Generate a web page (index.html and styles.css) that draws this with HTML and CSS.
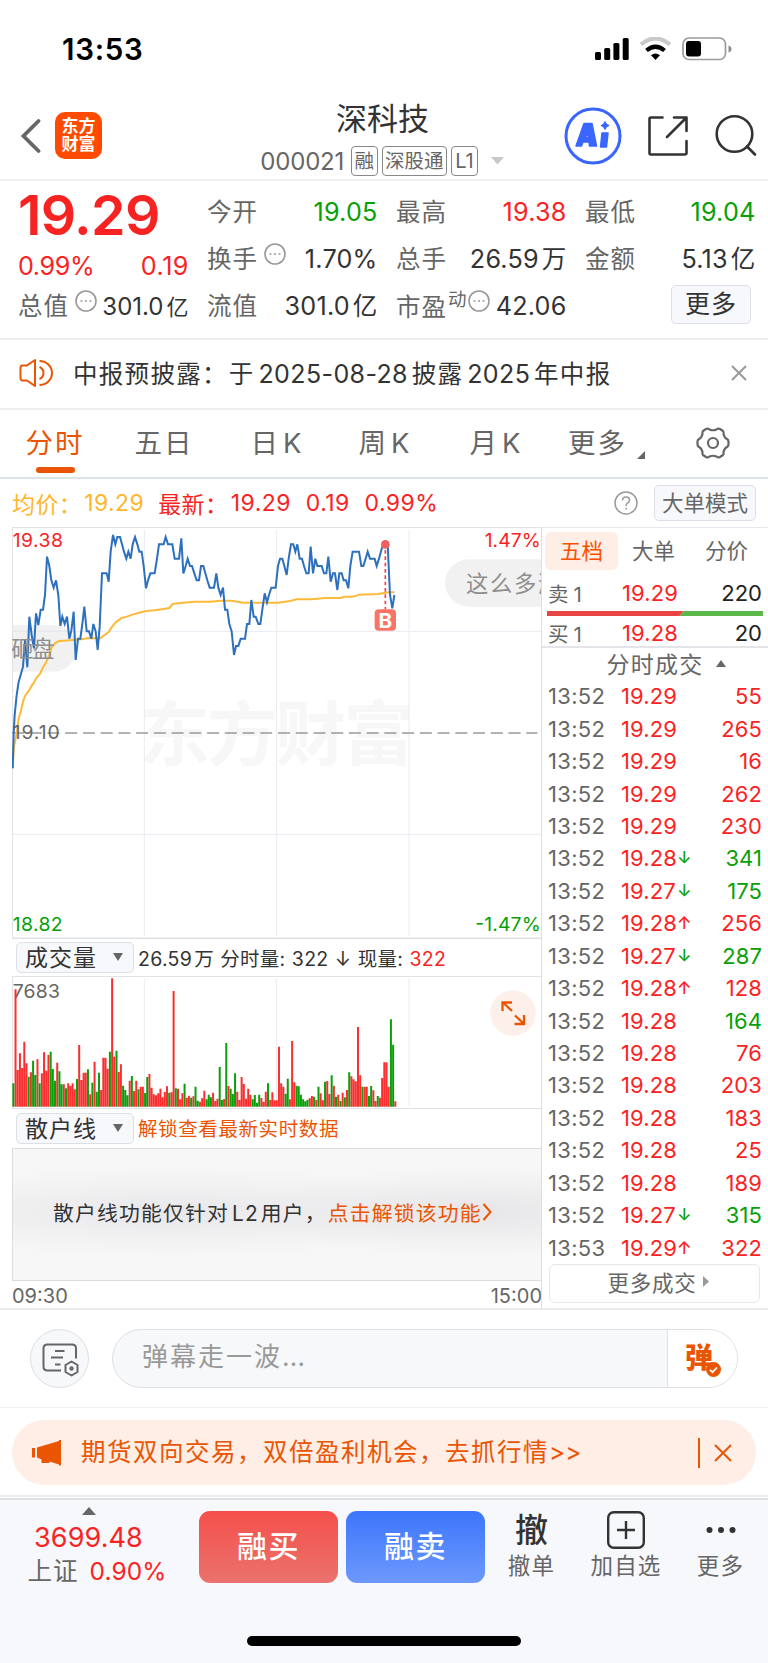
FILE: index.html
```html
<!DOCTYPE html>
<html lang="zh-CN">
<head>
<meta charset="utf-8">
<title>深科技 000021</title>
<link rel="stylesheet" href="styles.css">
</head>
<body>
<div class="app">
  <div class="status">
    <span class="clock">13:53</span>
    <svg class="status-icons" viewBox="0 0 138 24" width="138" height="24">
      <rect x="0" y="15" width="6" height="8" rx="1.5"/><rect x="9.2" y="11" width="6" height="12" rx="1.5"/><rect x="18.4" y="6" width="6" height="17" rx="1.5"/><rect x="27.7" y="1" width="6" height="22" rx="1.5"/>
      <path d="M46 7.500Q60.500-4.500 75 7.500" fill="none" stroke="#c9c9c9" stroke-width="4.200"/>
      <path d="M51.500 13.500Q60.500 6 69.500 13.500" fill="none" stroke="#000" stroke-width="4.200"/>
      <path d="M56 18.300Q60.500 14.500 65 18.300L60.500 23Z"/>
      <rect x="88" y="1" width="42.500" height="21.500" rx="6" fill="none" stroke="#9a9a9a" stroke-width="1.700"/>
      <rect x="91" y="4" width="15" height="15.600" rx="3"/>
      <path d="M133.500 8.500Q136.500 9.500 136.500 12T133.500 15.500Z" fill="#8c8c8c"/>
    </svg>
  </div>

  <header class="nav">
    <svg class="back" width="22" height="36" viewBox="0 0 22 36"><path d="M19.500 3L4.500 18L19.500 33" fill="none" stroke="#666" stroke-width="3.800" stroke-linecap="round"/></svg>
    <div class="logo"><span>东方</span><span>财富</span></div>
    <div class="title">
      <h1>深科技</h1>
      <div class="sub"><span class="code">000021</span><span class="tag">融</span><span class="tag">深股通</span><span class="tag l1">L1</span><svg width="13" height="8" viewBox="0 0 13 8"><path d="M0 0H13L6.500 7.500Z" fill="#c8c8c8"/></svg></div>
    </div>
    <svg class="nav-icons" width="196" height="58" viewBox="0 0 196 58" fill="none" stroke="#333" stroke-width="2.600" stroke-linecap="round" stroke-linejoin="round">
      <circle cx="29" cy="29" r="27" stroke="#3a66ff" stroke-width="3"/>
      <g fill="#3a66ff" stroke="#3a66ff" stroke-width="1.500">
        <path fill-rule="evenodd" d="M12 39L20 16.500H28L32.500 39H25.500L25 35H19L17.500 39ZM21 30.500H24.500L24 26Z"/>
        <path d="M38 26H44L42.500 40H36.500Z"/>
        <path d="M41 15Q41.800 18 44.500 18.500Q41.800 19.200 41 22Q40.200 19.200 37.500 18.500Q40.200 18 41 15Z"/>
      </g>
      <path d="M98.500 10.500H87Q85.500 10.500 85.500 12V46Q85.500 47.500 87 47.500H120.500Q122.500 47.500 122.500 46V34M110 10.500H122.500V24M122 11L103 30"/>
      <circle cx="170.500" cy="27" r="17.800"/><path d="M183 39.500L191 47.500"/>
    </svg>
  </header>

  <section class="quote">
    <div class="big">19.29</div>
    <div class="cell chg red"><span>0.99%</span><span class="d">0.19</span></div>
    <div class="cell cap"><label>总值</label><svg class="dots" width="22" height="22" viewBox="0 0 22 22"><circle cx="11" cy="11" r="10"/><path d="M5.500 11h2M10 11h2M14.500 11h2"/></svg><b class="sm">301.0<i>亿</i></b></div>
    <div class="cell c2 r1"><label>今开</label><b class="green">19.05</b></div>
    <div class="cell c3 r1"><label>最高</label><b class="red">19.38</b></div>
    <div class="cell c4 r1"><label>最低</label><b class="green">19.04</b></div>
    <div class="cell c2 r2"><label>换手</label><svg class="dots" width="22" height="22" viewBox="0 0 22 22"><circle cx="11" cy="11" r="10"/><path d="M5.500 11h2M10 11h2M14.500 11h2"/></svg><b>1.70%</b></div>
    <div class="cell c3 r2"><label>总手</label><b>26.59<i>万</i></b></div>
    <div class="cell c4 r2"><label>金额</label><b>5.13<i>亿</i></b></div>
    <div class="cell c2 r3"><label>流值</label><b>301.0<i>亿</i></b></div>
    <div class="cell c3 r3"><label>市盈<sup>动</sup></label><svg class="dots pe" width="22" height="22" viewBox="0 0 22 22"><circle cx="11" cy="11" r="10"/><path d="M5.500 11h2M10 11h2M14.500 11h2"/></svg><b>42.06</b></div>
    <div class="cell c4 r3"><button class="btn more">更多</button></div>
  </section>

  <section class="notice">
    <svg width="34" height="30" viewBox="0 0 34 30" fill="none" stroke="#ea5504" stroke-width="2" stroke-linejoin="round"><path d="M16 2V28L8 22.500H3Q1.500 22 1.500 20.500V9.500Q1.500 8 3 7.500H8ZM20.500 3A12.500 12 0 0 1 20.500 27M20.500 9A6.500 6.500 0 0 1 20.500 21"/></svg>
    <p>中报预披露：<i class="yu">于</i><span class="n">2025-08-28</span>披露<span class="n">2025</span>年中报</p>
    <svg class="x" width="16" height="16" viewBox="0 0 16 16"><path d="M1 1L15 15M15 1L1 15" stroke="#999" stroke-width="2"/></svg>
  </section>

  <nav class="tabs">
    <span class="t1 on">分时</span><span class="t2">五日</span><span class="t3">日<em>K</em></span><span class="t4">周<em>K</em></span><span class="t5">月<em>K</em></span><span class="t6">更多</span>
    <svg class="corner" width="8" height="8" viewBox="0 0 8 8"><path d="M8 0V8H0Z" fill="#666"/></svg>
    <svg class="gear" width="34" height="34" viewBox="0 0 34 34" fill="none" stroke="#666" stroke-width="2.200" stroke-linejoin="round"><path d="M10 3Q12 2 13.500 3.500Q17 5 20.500 3.500Q22 2 24 3L27 5Q28 6 27.500 8Q28.500 12 31 13Q32.500 14 32.500 15.500V18.500Q32.500 20 31 21Q28.500 22 27.500 26Q28 28 27 29L24 31Q22 32 20.500 30.500Q17 29 13.500 30.500Q12 32 10 31L7 29Q6 28 6.500 26Q5.500 22 3 21Q1.500 20 1.500 18.500V15.500Q1.500 14 3 13Q5.500 12 6.500 8Q6 6 7 5Z"/><circle cx="17" cy="17" r="5"/></svg>
  </nav>

  <div class="info">
    <span class="avg">均价：</span><span class="avg v1">19.29</span><span class="red k2">最新：</span><span class="red v2">19.29</span><span class="red v3">0.19</span><span class="red v4">0.99%</span>
    <svg class="help" width="24" height="24" viewBox="0 0 24 24" fill="none" stroke="#999" stroke-width="1.500"><circle cx="12" cy="12" r="11"/><path d="M8.500 9.500Q8.500 6 12 6T15.500 9.300Q15.500 11 13.500 12.200Q12 13.100 12 15M12 16.800V18.500"/></svg>
    <button class="btn mode">大单模式</button>
  </div>

  <main class="body">
    <div class="charts">
      <svg class="price" viewBox="36 381 1587 1236" width="529" height="412">
        <text class="wm" x="418" y="1080" textLength="824">东方财富</text>
        <g class="grid"><path d="M433 390V1608M829 390V1608M1227 390V1608M38 694H1624M38 1303H1624"/></g>
        <path d="M37 381V1616M36 382H1624" stroke="#dcdde3" stroke-width="3"/><path d="M36 1615H1626" stroke="#dfe1e4" stroke-width="5"/>
        <path d="M36 999H1612" stroke="#999" stroke-width="4" stroke-dasharray="36 17.200"/>
        <g class="danmu"><path d="M36 675H160A70 70 0 0 1 160 815H36Z"/><path d="M1626 478H1406A71 71 0 0 0 1406 620H1626Z"/></g>
        <polyline class="line avgline" points="38,1105 42,1040 50,1000 56,955 62,935 69,905 75,888 82,878 88,870 95,857 102,848 108,835 120,822 130,800 137,790 148,765 155,742 165,730 175,724 190,722 245,718 265,714 300,715 312,706 325,697 335,682 347,667 365,654 380,650 400,643 425,636 445,632 465,631 485,628 508,624 518,612 540,609 585,605 630,605 660,602 695,602 730,608 835,608 870,603 890,598 935,598 975,594 1020,594 1035,590 1058,590 1078,584 1135,582 1165,577 1183,577"/>
        <polyline class="line now" points="38,1105 41,1000 44,945 50,885 56,845 62,825 69,800 75,720 82,802 88,650 95,705 102,745 108,640 115,675 122,629 129,629 135,585 141,470 148,498 154,541 161,563 168,541 175,585 181,678 187,650 194,672 201,650 208,716 214,692 221,635 227,780 234,716 241,716 247,672 253,620 260,694 267,694 274,716 280,672 287,694 293,750 299,680 306,520 320,520 326,545 332,455 339,405 346,433 352,411 360,411 366,433 372,455 379,476 385,455 392,476 398,433 405,411 412,433 418,455 425,455 431,498 438,565 444,541 451,520 464,520 471,476 477,433 491,433 497,411 504,433 517,433 524,476 537,476 544,415 550,520 557,498 563,476 570,498 576,498 583,520 590,541 597,541 603,498 610,498 616,520 622,541 629,563 642,563 649,520 655,563 662,585 669,563 675,629 682,629 688,672 695,694 702,765 708,738 715,738 722,716 735,716 741,672 748,672 754,600 761,650 767,650 775,672 781,672 787,629 794,580 801,607 807,585 814,563 827,563 834,498 840,476 847,476 853,498 860,525 866,476 873,433 880,433 886,455 892,433 899,476 906,476 912,498 919,520 926,520 932,440 939,520 946,476 952,498 965,498 972,520 979,520 985,470 992,545 999,520 1005,520 1012,570 1018,520 1025,520 1031,541 1038,541 1045,565 1051,498 1058,455 1077,455 1084,498 1090,498 1097,476 1103,455 1110,476 1124,476 1130,498 1137,476 1144,450 1150,433 1163,433 1170,585 1177,625 1183,585"/>
        <g class="dtext"><text x="34" y="770" textLength="134">砸盘</text><text x="1398" y="575">这么多涨</text></g>
        <path d="M1156 450V628" stroke="#f5414e" stroke-width="5" stroke-dasharray="11 8"/>
        <circle cx="1156" cy="433" r="13" fill="#f0605e"/>
        <rect x="1124" y="628" width="64" height="64" rx="12" fill="#fb7366"/>
        <text class="bmark" x="1156" y="683" text-anchor="middle">B</text>
        <g class="axis">
          <text class="fr" x="38" y="440" textLength="151">19.38</text>
          <text class="fr" x="1622" y="440" text-anchor="end" textLength="168">1.47%</text>
          <text class="fg" x="38" y="1592" textLength="150">18.82</text>
          <text class="fg" x="1622" y="1592" text-anchor="end" textLength="196">-1.47%</text>
          <text x="38" y="1018" textLength="141">19.10</text>
        </g>
      </svg>
      <div class="ind">
        <span class="btn sel">成交量<i class="tri"></i></span>
        <span class="vals">26.59<i class="wan">万</i> 分时量: 322 ↓ 现量: <span class="red">322</span></span>
      </div>
      <div class="volwrap">
        <svg class="vol" viewBox="36 770 1587 399" width="529" height="133">
          <g class="grid"><path d="M433 778V1162M829 778V1162M1227 778V1162"/></g>
          <path d="M37 770V1168M36 771H1624M36 1168H1624" stroke="#dcdde3" stroke-width="3"/>
          <text class="axis" x="38" y="836" textLength="142">7683</text>
          <path id="up" stroke="#fa2e2e"/><path id="down" stroke="#0a9e0a"/>
        </svg>
        <svg class="expand" width="46" height="46" viewBox="0 0 46 46"><circle cx="23" cy="23" r="22.800" fill="#fdf0ea"/><path d="M22 21L13 12.500M12.500 21V12.500H22M25 25.500L33.500 33.500M34 25V34H24.500" fill="none" stroke="#ea5504" stroke-width="2.300"/></svg>
      </div>
      <div class="ind two">
        <span class="btn sel">散户线<i class="tri"></i></span>
        <span class="unlock">解锁查看最新实时数据</span>
      </div>
      <div class="lock">
        <p>散户线功能仅针对<em>L2</em>用户，<a>点击解锁该功能</a></p><svg width="10" height="18" viewBox="0 0 10 18"><path d="M1.500 1L8.500 9L1.500 17" fill="none" stroke="#ea5504" stroke-width="2"/></svg>
      </div>
      <div class="times"><span>09:30</span><span>15:00</span></div>
    </div>

    <aside class="side">
      <div class="stabs"><span class="on">五档</span><span>大单</span><span>分价</span></div>
      <div class="lv"><span class="k">卖<i>1</i></span><span class="red p">19.29</span><span class="v">220</span></div>
      <svg class="ratio" width="216" height="5" viewBox="0 0 216 5"><path d="M0 0H137L132.500 5H0Z" fill="#e84545"/><path d="M137 0H216V5H132.500Z" fill="#5cb849"/></svg>
      <div class="lv buy"><span class="k">买<i>1</i></span><span class="red p">19.28</span><span class="v">20</span></div>
      <div class="dealhead">分时成交<svg width="10" height="7" viewBox="0 0 10 7"><path d="M0 7L5 0L10 7Z" fill="#666"/></svg></div>
      <div class="deals">
        <div><time>13:52</time><b>19.29</b><s></s><u class="red">55</u></div>
        <div><time>13:52</time><b>19.29</b><s></s><u class="red">265</u></div>
        <div><time>13:52</time><b>19.29</b><s></s><u class="red">16</u></div>
        <div><time>13:52</time><b>19.29</b><s></s><u class="red">262</u></div>
        <div><time>13:52</time><b>19.29</b><s></s><u class="red">230</u></div>
        <div><time>13:52</time><b>19.28</b><s class="green">↓</s><u class="green">341</u></div>
        <div><time>13:52</time><b>19.27</b><s class="green">↓</s><u class="green">175</u></div>
        <div><time>13:52</time><b>19.28</b><s class="red">↑</s><u class="red">256</u></div>
        <div><time>13:52</time><b>19.27</b><s class="green">↓</s><u class="green">287</u></div>
        <div><time>13:52</time><b>19.28</b><s class="red">↑</s><u class="red">128</u></div>
        <div><time>13:52</time><b>19.28</b><s></s><u class="green">164</u></div>
        <div><time>13:52</time><b>19.28</b><s></s><u class="red">76</u></div>
        <div><time>13:52</time><b>19.28</b><s></s><u class="red">203</u></div>
        <div><time>13:52</time><b>19.28</b><s></s><u class="red">183</u></div>
        <div><time>13:52</time><b>19.28</b><s></s><u class="red">25</u></div>
        <div><time>13:52</time><b>19.28</b><s></s><u class="red">189</u></div>
        <div><time>13:52</time><b>19.27</b><s class="green">↓</s><u class="green">315</u></div>
        <div><time>13:53</time><b>19.29</b><s class="red">↑</s><u class="red">322</u></div>
      </div>
      <div class="moredeal">更多成交<svg width="6" height="11" viewBox="0 0 6 11"><path d="M0 0L6 5.500L0 11Z" fill="#999"/></svg></div>
    </aside>
  </main>

  <section class="comment">
    <div class="round"><svg width="37" height="34" viewBox="0 0 37 34" fill="none" stroke="#666" stroke-width="2"><path d="M19 27.500H5.500Q1.500 27.500 1.500 23.500V5.500Q1.500 1.500 5.500 1.500H30Q34 1.500 34 5.500V15.500M13 8H22.500M9 14.500H21M13 21.500H18.500"/><path d="M29.500 18.500L35.500 22V29L29.500 32.500L23.500 29V22Z" stroke-linejoin="round"/><circle cx="29.500" cy="25.500" r="1.200"/></svg></div>
    <div class="field"><span>弹幕走一波<i>...</i></span><div class="send"><b>弹</b><svg width="15" height="15" viewBox="0 0 15 15"><circle cx="7.500" cy="7.500" r="7.500" fill="#ea5504"/><path d="M4 7.800L6.500 10.200L11 5.500" fill="none" stroke="#fff" stroke-width="1.700"/></svg></div></div>
  </section>

  <section class="promo">
    <div class="pill">
      <svg width="31" height="27" viewBox="0 0 31 27" fill="#ea5504"><path d="M1 9H4V18.500H1ZM6 8.500L28 2V1H30V26.500H28V25.500L18.500 22.500V24H10.500V20.500L6 18.500Z"/></svg>
      <span>期货双向交易，双倍盈利机会，去抓行情<i>&gt;&gt;</i></span>
      <svg class="close" width="34" height="30" viewBox="0 0 34 30"><path d="M1 0V30M17 7L33 23M33 7L17 23" stroke="#ea5504" stroke-width="2"/></svg>
    </div>
  </section>

  <footer class="foot">
    <div class="row">
      <div class="index"><svg width="14" height="8" viewBox="0 0 14 8"><path d="M0 8L7 0L14 8Z" fill="#666"/></svg><span class="pt red">3699.48</span><span class="nm">上证<b class="red">0.90%</b></span></div>
      <div class="act buyb">融买</div>
      <div class="act sellb">融卖</div>
      <div class="it i1"><strong>撤</strong><span>撤单</span></div>
      <div class="it i2"><svg width="38" height="38" viewBox="0 0 38 38" fill="none" stroke="#333" stroke-width="2.400"><rect x="1.200" y="1.200" width="35.600" height="35.600" rx="5.500"/><path d="M10 19H28M19 10V28"/></svg><span>加自选</span></div>
      <div class="it i3"><svg width="30" height="38" viewBox="0 0 30 38" fill="#333"><circle cx="3.500" cy="19" r="3"/><circle cx="15" cy="19" r="3"/><circle cx="26.500" cy="19" r="3"/></svg><span>更多</span></div>
    </div>
    <div class="home"></div>
  </footer>
</div>
<script src="volume.js"></script>
</body>
</html>
```
FILE: styles.css
```css
* { box-sizing: border-box; margin: 0; padding: 0; }
body { background: #fff; font-family: Inter, "Noto Sans CJK SC", sans-serif; color: #333; }
.app { width: 768px; height: 1663px; overflow: hidden; font-weight: 400; }
svg { display: block; flex: none; }
span, b, label, p, button, h1, time { white-space: nowrap; }
i, em { font-style: normal; }
.red { color: #fa2323; }
.green { color: #07a007; }
.btn { background: #f7f8fb; border: 1.500px solid #dcdfe5; border-radius: 5px; color: #333; font-family: inherit; }

.status { height: 93px; display: flex; justify-content: space-between; padding: 37px 35px 0 62px; }
.clock { font-size: 29.500px; line-height: 25px; font-weight: 600; color: #000; letter-spacing: .7px; }

.nav { height: 88px; border-bottom: 2px solid #f0f1f2; display: flex; padding: 19px 0 0 19px; }
.back { margin-top: 6px; }
.logo { width: 47px; height: 47px; margin-left: 14px; background: #ff4a00; border-radius: 10px; color: #fff; font-weight: 700; font-size: 17px; line-height: 18px; display: flex; flex-direction: column; align-items: center; justify-content: center; padding-bottom: 1px; }
.title { flex: 1; display: flex; flex-direction: column; align-items: center; margin-left: 99px; width: 0; }
.title h1 { font-size: 31px; font-weight: 400; line-height: 36px; margin-top: -11px; }
.sub { display: flex; align-items: center; margin: 9px 1px 0 0; height: 30px; color: #666; }
.code { font-size: 24px; letter-spacing: -.2px; margin-right: 7px; }
.tag { height: 30px; border: 1.500px solid #888; border-radius: 4px; font-size: 19.500px; line-height: 28px; padding: 0 2.500px; margin-right: 4px; }
.tag.l1 { font-size: 20px; padding: 0 3px; margin-right: 13px; }
.nav-icons { margin-right: 8px; margin-top: -5px; }

.quote { height: 159px; border-bottom: 2px solid #eaeeef; display: grid; grid-template-columns: repeat(4, 169px); column-gap: 20px; grid-template-rows: repeat(3, 47px); padding: 7px 0 0 18px; }
.big { grid-area: 1 / 1; font-size: 55.500px; font-weight: 600; color: #f72222; line-height: 54px; letter-spacing: -.7px; }
.cell { display: flex; align-items: center; justify-content: space-between; font-size: 25.200px; line-height: 30px; height: 47px; padding-top: 1px; }
.cell label { color: #666; font-size: 24.500px; letter-spacing: 1px; }
.cell b { font-weight: 400; margin-left: auto; letter-spacing: .2px; margin-right: -1.500px; }
.cell b i { margin-left: 3px; font-size: 24.500px; }
.chg { grid-area: 2 / 1; padding-top: 15px; letter-spacing: -.4px; }
.chg .d { letter-spacing: .5px; margin-right: -2px; }
.cap { grid-area: 3 / 1; }
.cell b.sm { font-size: 24px; letter-spacing: 0; padding-top: 2px; }
.cell b.sm i { font-size: 22px; }
.c2 { grid-column: 2; } .c3 { grid-column: 3; } .c4 { grid-column: 4; }
.r1 { grid-row: 1; } .r2 { grid-row: 2; } .r3 { grid-row: 3; }
.dots { fill: none; stroke: #999; stroke-width: 1.600; margin: -10px 0 0 6px; }
.dots.pe { margin-left: 1px; }
.cell sup { font-size: 18.500px; line-height: 1; vertical-align: 10px; letter-spacing: 0; margin-left: 1px; }
.more { width: 80px; height: 39px; font-size: 25px; letter-spacing: 1px; line-height: 34px; margin: -4px 3px 0 auto; }

.notice { height: 70px; border-bottom: 2px solid #edeef0; display: flex; align-items: center; padding: 0 21px 2px 19px; }
.notice p { font-size: 24.500px; letter-spacing: 1.300px; margin: -2px 0 0 20px; flex: 1; }
.notice .yu { margin-left: 1px; }
.notice .n { font-size: 25px; letter-spacing: .4px; margin: 0 3.800px; }

.tabs { height: 69px; border-bottom: 2px solid #dee3e8; display: flex; align-items: center; color: #666; font-size: 27.500px; text-align: center; }
.tabs span { letter-spacing: 2px; height: 67px; line-height: 67px; flex: none; }
.tabs em { margin-left: 3px; letter-spacing: 0; }
.tabs .t1 { width: 109px; position: relative; padding-left: 1px; } .tabs .t2 { width: 108px; padding-left: 2px; } .tabs .t3 { width: 119px; padding-right: 1px; } .tabs .t4 { width: 97px; padding-right: 1px; } .tabs .t5 { width: 125px; padding-right: 1px; } .tabs .t6 { width: 78px; padding-left: 1px; }
.tabs .on { color: #ea5504; }
.on.t1::after { content: ""; position: absolute; left: 35.500px; bottom: 4px; width: 39px; height: 6px; border-radius: 3px; background: #ea5504; }
.corner { margin: 22px 0 0 1px; }
.gear { margin-left: 51px; margin-top: -2px; }

.info { height: 48px; display: flex; align-items: center; padding: 0 12px; font-size: 23px; }
.info span { letter-spacing: .4px; }
.avg { color: #ffb62e; }
.info .v1 { margin-left: 2px; } .k2 { margin-left: 14px; } .v2 { margin-left: 2.500px; } .v3 { margin-left: 15px; } .v4 { margin-left: 15px; }
.help { margin-left: auto; }
.mode { width: 102px; height: 36px; font-size: 21.500px; color: #666; margin-left: 16px; line-height: 30px; }

.body { display: flex; height: 783px; border-bottom: 2px solid #e9ecee; padding-left: 12px; }
.charts { width: 529px; }
.grid { stroke: #e8ebf1; stroke-width: 3; fill: none; }
.line { fill: none; stroke-linejoin: miter; }
.avgline { stroke: #fdba38; stroke-width: 6; }
.now { stroke: #2d70be; stroke-width: 6; }
.wm { font-size: 212px; font-weight: 700; fill: #f7f7f7; }
.danmu { fill: #dedede; opacity: .42; }
.dtext { font-size: 67px; fill: #8e8e8e; letter-spacing: 5px; }
.bmark { font-size: 62px; font-weight: 700; fill: #fff; }
.axis { font-size: 58px; fill: #666; }
.fr { fill: #fa2323; } .fg { fill: #07a007; }
.ind { height: 37px; display: flex; align-items: center; padding-left: 4px; }
.ind.two { height: 39px; }
.sel { width: 118px; height: 31px; display: flex; align-items: center; justify-content: space-between; padding: 0 10px 3px 8px; font-size: 23px; letter-spacing: 1px; }
.tri { border: 5px solid transparent; border-top: 8px solid #666; border-bottom: 0; margin-top: 2px; }
.vals { font-size: 19.500px; margin: -1px 0 0 4px; word-spacing: .5px; letter-spacing: .3px; }
.wan { margin-left: 2px; }
.unlock { font-size: 19.500px; margin: -2px 0 0 4px; letter-spacing: .6px; color: #ea5504; }
.volwrap { position: relative; height: 133px; }
.vol path { fill: none; }
#up, #down { stroke-width: 6; }
.expand { position: absolute; left: 478px; top: 14px; }
.lock { height: 133px; display: flex; align-items: center; padding: 0 0 5px 40px; border: 1.500px solid #dcdde3; border-right: 0; background: radial-gradient(ellipse 60% 34% at 30% 48%, #e8e8ea, rgba(247,247,248,0)), radial-gradient(ellipse 45% 34% at 88% 48%, #e6e6e8, rgba(247,247,248,0)), #f7f7f8; font-size: 20.800px; letter-spacing: 1.200px; }
.lock em { margin: 0 2px 0 3px; }
.lock a { color: #ea5504; margin-left: 1px; }
.times { display: flex; justify-content: space-between; height: 27px; line-height: 31px; font-size: 20px; color: #666; margin-right: -1px; }

.side { width: 227px; border-left: 1.500px solid #dddee3; border-top: 1.500px solid #e8e9ec; color: #666; }
.stabs { display: flex; padding: 4px 0 0 3px; font-size: 21.500px; line-height: 38px; }
.stabs span { width: 73px; text-align: center; }
.stabs span + span { padding-right: 2px; }
.stabs .on { background: #feeee6; color: #fa5000; border-radius: 6px; }
.lv { display: flex; height: 40px; align-items: center; font-size: 22px; padding: 5px 6px 0 6px; }
.lv .k { width: 74px; font-size: 20.500px; } .lv .k i { margin-left: 5px; } .lv .v { margin-left: auto; color: #222; }
.lv .p { letter-spacing: .1px; }
.lv.buy { height: 30px; padding-top: 3px; }
.ratio { margin: 1px 0 0 5px; }
.dealhead { height: 34px; display: flex; align-items: center; justify-content: center; font-size: 23px; letter-spacing: 1.200px; border-top: 2px solid #e3e5e8; gap: 13px; padding-left: 23px; padding-bottom: 2px; }
.deals div { display: flex; align-items: center; height: 32.450px; padding: 0 6px 0 6px; font-size: 22px; }
.deals time { width: 73px; letter-spacing: .3px; }
.deals b { font-weight: 400; color: #fa2323; width: 56px; letter-spacing: .1px; }
.deals s, .deals u { text-decoration: none; }
.deals s { font-size: 17px; width: 14px; text-align: center; font-weight: 500; }
.deals u { margin-left: auto; letter-spacing: .1px; }
.moredeal { width: 211px; height: 39px; border: 1.500px solid #e5e7ea; border-radius: 6px; margin-left: 7px; display: flex; align-items: center; justify-content: center; font-size: 21.500px; letter-spacing: .8px; gap: 6px; padding: 0 0 3px 7px; }

.comment { height: 98px; display: flex; align-items: center; padding: 0 30px; border-bottom: 1.500px solid #f0f1f2; }
.round { width: 59px; height: 59px; border-radius: 50%; background: #f7f8fa; border: 1.500px solid #dcdfe5; display: flex; align-items: center; justify-content: center; padding: 2px 0 0 1px; }
.field { margin-left: 23px; width: 626px; height: 59px; border: 1.500px solid #dcdfe5; border-radius: 30px; background: #f7f8fa; display: flex; align-items: center; overflow: hidden; }
.field > span { font-size: 26px; letter-spacing: 2px; color: #999; margin-left: 29px; padding-bottom: 9px; }
.field > span i { letter-spacing: .2px; }
.send { margin-left: auto; width: 70px; height: 58px; background: #fff; border-left: 1.500px solid #dcdfe5; position: relative; }
.send b { position: absolute; left: 17px; top: 8px; font-size: 28px; line-height: 40px; font-weight: 900; color: #ea5504; }
.send svg { position: absolute; left: 38px; top: 32px; }

.promo { height: 89px; padding: 12px 12px 0; border-bottom: 2px solid #ebecee; }
.pill { height: 65px; border-radius: 33px; background: #feeee6; color: #ea5504; display: flex; align-items: center; padding: 0 24px 0 19px; }
.pill span { font-size: 24.500px; letter-spacing: 1.500px; margin: 0 0 4px 19px; }
.pill i { letter-spacing: 0; }
.close { margin-left: auto; }

.foot { margin-top: 1px; height: 167px; background: #f7f8fb; border-top: 2px solid #dddfe3; }
.row { display: flex; padding-top: 11px; height: 84px; }
.index { width: 199px; display: flex; flex-direction: column; align-items: center; padding-right: 22px; margin-top: -4px; }
.pt { font-size: 27px; line-height: 32px; margin-top: 7px; letter-spacing: .1px; }
.nm { font-size: 24.500px; letter-spacing: 1px; color: #666; line-height: 35px; margin-left: 17px; }
.nm b { font-weight: 400; margin-left: 11px; letter-spacing: .1px; }
.act { width: 139px; height: 72px; border-radius: 11px; color: #fff; font-size: 30px; font-weight: 500; letter-spacing: 1.500px; line-height: 71px; text-align: center; margin-right: 8px; }
.buyb { background: linear-gradient(#f4504b, #eb726d); }
.sellb { background: linear-gradient(#3c76fb, #6d99fd); }
.it { display: flex; flex-direction: column; align-items: center; color: #666; font-size: 22.500px; }
.it span { line-height: 33px; letter-spacing: 1.200px; }
.it strong { font-size: 33px; font-weight: 500; line-height: 38px; color: #333; }
.i1 { width: 77px; } .i2 { width: 112px; } .i3 { width: 77px; }
.home { width: 274px; height: 10px; border-radius: 5px; background: #000; margin: 52px auto 0; }
```
FILE: volume.js
```js
// Minute volumes: positive = rising minute, negative = falling minute.
const volumes = [-70,352,110,160,116,195,130,-90,103,-138,-95,142,-70,100,163,108,155,-165,-113,-78,132,-106,-67,67,-55,70,62,70,52,-83,185,80,102,102,-112,37,-72,135,-45,-102,50,147,147,114,-165,385,150,-168,104,127,-63,-50,-34,78,-92,47,78,-52,60,60,-41,-89,98,57,37,34,40,54,28,44,61,-42,43,347,-55,54,22,40,-69,27,33,-27,31,-60,-18,15,25,48,-22,-36,-28,42,17,24,-119,-20,23,-191,62,-54,-38,-100,45,20,89,68,24,54,36,-22,-35,-12,-36,26,15,45,-70,20,43,19,19,180,70,60,-39,-84,22,197,73,-63,-61,-36,-22,-16,-21,25,32,-30,20,-60,40,19,-75,77,38,-94,63,-30,36,-17,42,-28,50,-103,91,82,76,239,94,-60,60,60,-32,-62,49,17,-32,27,86,133,133,60,-262,-186,16];
const base = 1162;
let up = "", down = "";
volumes.forEach((v, i) => {
  const seg = "M" + (40 + i * 6.586).toFixed(1) + " " + base + "V" + (base - Math.abs(v));
  if (v > 0) up += seg; else down += seg;
});
document.getElementById("up").setAttribute("d", up);
document.getElementById("down").setAttribute("d", down);
```
